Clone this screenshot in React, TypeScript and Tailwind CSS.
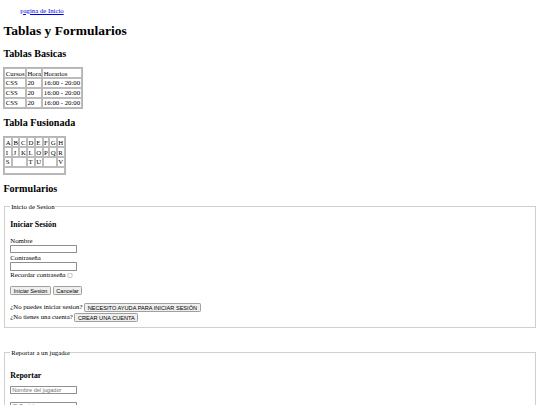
import React from "react";

const cell = "border border-solid border-[#bcbcbc] p-[1px] text-left align-middle";
const tbl = "border-separate border-spacing-[2px] border border-solid border-[#b4b4b4]";
const btn =
  "inline-block bg-[#efefef] border border-solid border-[#a0a0a0] rounded-[3px] px-[6px] py-[1px] h-[21px] align-baseline text-[13.333px] leading-[normal] font-['Liberation_Sans',Arial,sans-serif] text-black";
const inp =
  "w-[159px] h-[21px] border border-solid border-[#8f8f8f] rounded-[2px] px-[2px] py-[1px] bg-white text-[13.333px] font-['Liberation_Sans',Arial,sans-serif] placeholder:text-[#757575] align-baseline";
const fs =
  "mx-[2px] border-2 border-solid border-[#cfcfcf] px-[12px] pt-[5.6px] pb-[10px]";

function Table1() {
  const rows = [
    ["CSS", "20", "16:00 - 20:00"],
    ["CSS", "20", "16:00 - 20:00"],
    ["CSS", "20", "16:00 - 20:00"],
  ];
  return (
    <table className={tbl}>
      <tbody>
        <tr>
          <td className={cell}>Cursos</td>
          <td className={cell}>Hora</td>
          <td className={cell}>Horarios</td>
        </tr>
        {rows.map((r, i) => (
          <tr key={i}>
            {r.map((c, j) => (
              <td key={j} className={cell}>
                {c}
              </td>
            ))}
          </tr>
        ))}
      </tbody>
    </table>
  );
}

function Table2() {
  return (
    <table className={tbl}>
      <tbody>
        <tr>
          {["A", "B", "C", "D", "E", "F", "G", "H"].map((c) => (
            <td key={c} className={cell}>
              {c}
            </td>
          ))}
        </tr>
        <tr>
          {["I", "J", "K", "L", "O", "P", "Q", "R"].map((c) => (
            <td key={c} className={cell}>
              {c}
            </td>
          ))}
        </tr>
        <tr>
          <td className={cell}>S</td>
          <td className={cell} colSpan={2}></td>
          <td className={cell}>T</td>
          <td className={cell}>U</td>
          <td className={cell} colSpan={2}></td>
          <td className={cell}>V</td>
        </tr>
        <tr>
          <td className={`${cell} h-[17px]`} colSpan={8}></td>
        </tr>
      </tbody>
    </table>
  );
}

export default function App() {
  return (
    <div className="[zoom:0.421875] bg-white text-black px-[8px] text-[16px] leading-[normal] font-['Liberation_Serif','Times_New_Roman',serif]">
      <ul className="my-[16px] pl-[40px] list-none">
        <li>
          <a href="#" className="text-[#0000ee] underline">
            pagina de Inicio
          </a>
        </li>
      </ul>
      <h1 className="text-[32px] font-bold my-[21.44px]">Tablas y Formularios</h1>
      <h2 className="text-[24px] font-bold my-[19.92px]">Tablas Basicas</h2>
      <Table1 />
      <h2 className="text-[24px] font-bold my-[19.92px]">Tabla Fusionada</h2>
      <Table2 />
      <h2 className="text-[24px] font-bold my-[19.92px]">Formularios</h2>

      <fieldset className={fs}>
        <legend className="px-[2px]">Inicio de Sesion</legend>
        <h3 className="text-[18.72px] font-bold my-[18.72px]">Iniciar Sesión</h3>
        <div>Nombre</div>
        <div className="py-[1.5px]">
          <input type="text" className={inp} />
        </div>
        <div>Contraseña</div>
        <div className="py-[1.5px]">
          <input type="password" className={inp} />
        </div>
        <div>
          Recordar contraseña
          <input type="checkbox" className="ml-[4px] mr-[3px] my-[3px] w-[13px] h-[13px] align-[-2px]" />
        </div>
        <div className="my-[17px]">
          <button className={btn}>Iniciar Sesion</button>{" "}
          <button className={btn}>Cancelar</button>
        </div>
        <div className="py-[1.5px]">
          ¿No puedes iniciar sesion?{" "}
          <button className={btn}>NECESITO AYUDA PARA INICIAR SESIÓN</button>
        </div>
        <div className="py-[1.5px]">
          ¿No tienes una cuenta? <button className={btn}>CREAR UNA CUENTA</button>
        </div>
      </fieldset>

      <fieldset className={`${fs} mt-[50px]`}>
        <legend className="px-[2px]">Reportar a un jugador</legend>
        <h3 className="text-[18.72px] font-bold mt-[29px] mb-[14px]">Reportar</h3>
        <div className="flex flex-col items-start gap-[17px]">
          <input type="text" placeholder="Nombre del jugador" className={inp} />
          <input type="text" placeholder="ID Partida" className={inp} />
          <input type="text" placeholder="Motivo" className={inp} />
        </div>
      </fieldset>
    </div>
  );
}
